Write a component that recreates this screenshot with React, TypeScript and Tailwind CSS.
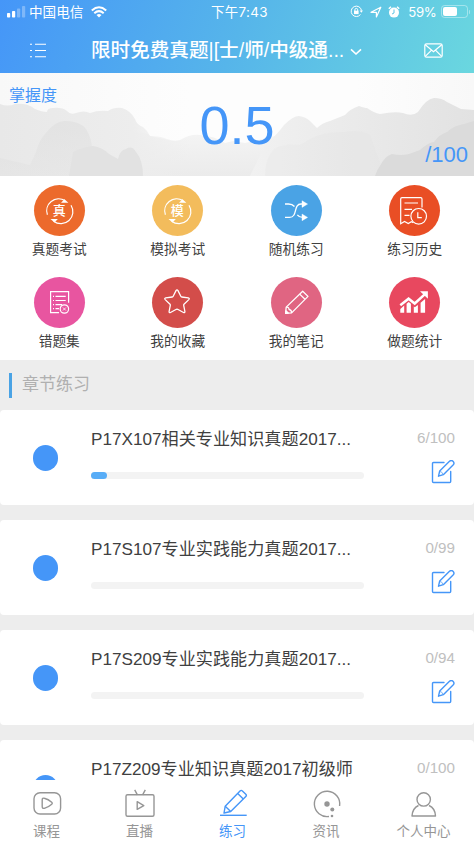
import React from 'react';

interface Feature {
  label: string;
  bg: string;
  icon: React.ReactNode;
}

interface Chapter {
  title: string;
  done: number;
  total: number;
}

const LoopIcon = ({ char }: { char: string }) => (
  <svg viewBox="0 0 51 51" className="h-full w-full" fill="none" stroke="white" strokeWidth="1.2">
    <path d="M13.4 29.8A12 12 0 0 1 31 15.6" />
    <path d="M37 20.2A12 12 0 0 1 19.6 36.2" />
    <path d="M27 17.7l3.4-3.5 4 3.5z M23.900 34.100h-7.400l4 3.500z" fill="white" stroke="none" />
    <text x="25.2" y="30.3" fontSize="13" fontWeight="500" textAnchor="middle" fill="white" stroke="none">{char}</text>
  </svg>
);

const ShuffleIcon = () => (
  <svg viewBox="0 0 51 51" className="h-full w-full" fill="none" stroke="white" strokeWidth="1.3">
    <path d="M14 19h3.500c2.500 0 4.500.8 6 2.500" />
    <path d="M14 32.400h4.500c8.500 0 3.500-13.400 11.500-13.400h2" />
    <path d="M26.300 29.800c1.300 1.700 3 2.500 5.500 2.600" />
    <path d="M31 15.700l5.600 3.400-5.600 3.300z M31 29l5.600 3.400-5.600 3.300z" fill="white" strokeWidth=".4" />
  </svg>
);

const HistoryIcon = () => (
  <svg viewBox="0 0 51 51" className="h-full w-full" fill="none" stroke="white" strokeWidth="1.2">
    <path d="M33 22.500V14q0-1.300-1.300-1.300H13q-1.300 0-1.300 1.300V38.700l3.800-2.200 3.800 2 3-1.700 2 1" />
    <path d="M15.500 18H29M15.500 24.300H23M15.500 30.400H20.500" />
    <circle cx="29.700" cy="31.300" r="7.800" />
    <path d="M28.800 27.300v5.400h4" />
  </svg>
);

const MistakeIcon = () => (
  <svg viewBox="0 0 51 51" className="h-full w-full" fill="none" stroke="white" strokeWidth="1.2">
    <path d="M34.600 25.800V14.600H16.600V35.700H25" />
    <path d="M19 19.400h1M21.500 19.400H31.700M19 23.500h1M21.500 23.500H31.700M19 27.600h1M21.500 27.600H28M19 31.700h1M21.500 31.700H25" />
    <circle cx="30.400" cy="32" r="4.200" />
    <path d="M28.900 30.500l3 3M31.900 30.500l-3 3" strokeWidth=".8" />
  </svg>
);

const StarIcon = () => (
  <svg viewBox="0 0 51 51" className="h-full w-full" fill="none" stroke="white" strokeWidth="1.300" strokeLinejoin="round">
    <path d="M24 13.600q1-1.600 2 0l2.800 5.700q.3.6 1 .7l6.500.9q1.600.4.500 1.700l-4.800 4.600q-.4.500-.3 1.100l1.200 6.200q.1 1.600-1.400 1l-5.900-3.200q-.6-.3-1.200 0l-5.900 3.200q-1.500.6-1.400-1l1.200-6.200q.1-.6-.3-1.100l-4.800-4.600q-1.100-1.300.500-1.700l6.500-.9q.7-.1 1-.7z" />
  </svg>
);

const NoteIcon = () => (
  <svg viewBox="0 0 51 51" className="h-full w-full" fill="none" stroke="white" strokeWidth="1.300" strokeLinejoin="round">
    <path d="M14.600 36.300l.6-6.200L31.700 14.200l5.300 5.200L20.600 35.900z" />
    <path d="M15.200 30.100q2.500-.4 2.900 2.400 2.600.4 2.500 3.400M28.700 17.100l5.300 5.200" />
    <path d="M14.700 36.300l.2-2.500 2.300 2.200z" fill="white" />
  </svg>
);

const StatsIcon = () => (
  <svg viewBox="0 0 51 51" className="h-full w-full" fill="white">
    <path d="M11.300 35.800v-3.800l3.900-3.400v7.200zM17.600 35.800v-9l2.100-1.800 2.200 1.800v9zM24.800 35.800v-6.200l1 .6 3.100-2.300v7.900zM31.600 35.800v-10l4.500-3.900v13.900z" />
    <path d="M11.300 28.300l8.300-6.600 6.100 4.800 10-9.200" fill="none" stroke="white" strokeWidth="2.500" />
    <path d="M31 14.300h7.900v7.500z" />
  </svg>
);

const EditIcon = () => (
  <svg viewBox="0 0 24 24" className="h-6 w-6" fill="none" stroke="#4596f8" strokeWidth="1.400" strokeLinejoin="round" strokeLinecap="round">
    <path d="M13 2.500H2.500q-1 0-1 1v18q0 1 1 1H18.700q1 0 1-1V11.500" />
    <path d="M7.500 16.200l1.200-5.200 9.800-9.700q1.700-1.500 3.500-.1 1.800 1.800.3 3.600l-10 9.900z" />
    <path d="M8.700 11.300q2.700.2 3.300 3" strokeWidth=".7" />
  </svg>
);

const features: Feature[] = [
  { label: '真题考试', bg: 'bg-[#ec6a2c]', icon: <LoopIcon char="真" /> },
  { label: '模拟考试', bg: 'bg-[#f3bc5c]', icon: <LoopIcon char="模" /> },
  { label: '随机练习', bg: 'bg-[#4aa3e5]', icon: <ShuffleIcon /> },
  { label: '练习历史', bg: 'bg-[#e94e25]', icon: <HistoryIcon /> },
  { label: '错题集', bg: 'bg-[#e855a0]', icon: <MistakeIcon /> },
  { label: '我的收藏', bg: 'bg-[#d34d4a]', icon: <StarIcon /> },
  { label: '我的笔记', bg: 'bg-[#e06582]', icon: <NoteIcon /> },
  { label: '做题统计', bg: 'bg-[#e8485f]', icon: <StatsIcon /> },
];

const chapters: Chapter[] = [
  { title: 'P17X107相关专业知识真题2017...', done: 6, total: 100 },
  { title: 'P17S107专业实践能力真题2017...', done: 0, total: 99 },
  { title: 'P17S209专业实践能力真题2017...', done: 0, total: 94 },
  { title: 'P17Z209专业知识真题2017初级师', done: 0, total: 100 },
];

const tabs = [
  {
    label: '课程',
    icon: (
      <>
        <rect x="3" y="5.700" width="26.600" height="21.300" rx="6" />
        <path d="M11.200 13q0-2.400 2.200-1.700 4 1 7.300 4 1.100 1 0 1.900-3.300 3-7.300 4.100-2.200.5-2.200-1.700z" />
      </>
    ),
  },
  {
    label: '直播',
    icon: (
      <>
        <rect x="2" y="7.800" width="28" height="21.400" rx="1.500" />
        <path d="M10.700 2.800l2.700 5M21.300 2.800l-2.700 5M13.200 14.700v7.700l6.600-3.800z" />
      </>
    ),
  },
  {
    label: '练习',
    icon: (
      <>
        <path d="M3 28.300H29.700" />
        <path d="M7 26l1.200-6.700L23 4q1.200-1.200 2.400-.1l3.400 3.300q1.200 1.200 0 2.400L13.700 24.500z" />
        <path d="M8.200 19.300l5.500 5.200M20.700 6.500l5.600 5.500" />
      </>
    ),
  },
  {
    label: '资讯',
    icon: (
      <>
        <path d="M29.600 19A12.700 12.700 0 1 0 19 29.500" />
        <g fill="#969696" stroke="none">
          <circle cx="17" cy="17" r="2.700" />
          <circle cx="22.300" cy="22.600" r="2" />
          <circle cx="22" cy="29" r="1.300" />
        </g>
      </>
    ),
  },
  {
    label: '个人中心',
    icon: (
      <>
        <circle cx="15.700" cy="12.400" r="6.700" />
        <path d="M10.500 18.500C6 20.500 4.300 24.500 4 29H27.500C27.300 24.500 25.500 20.500 21 18.500" />
      </>
    ),
  },
];

const StatusBar = () => (
  <div className="grid h-6 grid-cols-[1fr_auto_1fr] items-center pl-[7px] pr-1 text-[13.600px] leading-none">
    <div className="flex items-center">
      <svg viewBox="0 0 19 12" className="mr-[3px] h-3 w-[19px]" fill="white">
        <rect x="0" y="7" width="3.200" height="4.500" rx=".8" />
        <rect x="5" y="5" width="3.200" height="6.500" rx=".8" />
        <rect x="10" y="2.500" width="3.200" height="9" rx=".8" opacity=".3" />
        <rect x="15" y="0" width="3.200" height="11.500" rx=".8" opacity=".3" />
      </svg>
      <span className="translate-y-px">中国电信</span>
      <svg viewBox="0 0 16 12" className="ml-2 h-3 w-4" fill="none" stroke="white" strokeWidth="2">
        <path d="M.8 4.400Q8-2 15.200 4.400M3.300 7.200Q8 3 12.700 7.200" />
        <path d="M5.500 9Q8 7 10.500 9L8 11.500z" fill="white" stroke="none" />
      </svg>
    </div>
    <div className="translate-x-px translate-y-px font-['Inter','Noto_Sans_CJK_SC',sans-serif] text-[13.400px] tracking-[0.4px]">下午7:43</div>
    <div className="flex items-center justify-end">
      <svg viewBox="0 0 13 13" className="h-[13px] w-[13px]" fill="none" stroke="white" strokeWidth="1">
        <path d="M10.500 9.500A5.200 5.200 0 1 1 11.500 5.500" />
        <path d="M9.600 5.500h3.400l-1.700 2.200z" fill="white" stroke="none" />
        <rect x="4" y="5.700" width="4.600" height="3.400" fill="white" stroke="none" />
        <path d="M4.900 6V4.800a1.400 1.400 0 0 1 2.800 0V6" />
      </svg>
      <svg viewBox="0 0 12 12" className="ml-[7px] h-3 w-3" fill="none" stroke="white" strokeWidth="1.200" strokeLinejoin="round">
        <path d="M1 6.300L10.800 1.200 6.400 11V6.300z" />
      </svg>
      <svg viewBox="0 0 12 12" className="ml-[6px] h-3 w-3">
        <circle cx="6" cy="6.600" r="5" fill="white" />
        <path d="M.8 2.800L3 .8M11.200 2.800L9 .8" stroke="white" strokeWidth="1.500" />
        <path d="M6 3.500V7L4 8" fill="none" stroke="#5fc3e3" strokeWidth="1" />
      </svg>
      <span className="ml-2 translate-y-px font-['Inter',sans-serif] text-[13.200px] tracking-[-0.3px]">59%</span>
      <div className="ml-1 flex h-[13px] w-[27px] rounded-[3.500px] border border-white/40 p-px">
        <div className="w-[14px] rounded-[2px] bg-white" />
      </div>
      <div className="ml-px h-1 w-[1.500px] rounded-r-full bg-white/40" />
    </div>
  </div>
);

const Mountains = () => (
  <svg viewBox="0 0 474 103" preserveAspectRatio="none" className="absolute inset-0 h-full w-full">
    <defs>
      <linearGradient id="sky" x1="0" y1="0" x2="1" y2="0">
        <stop offset="0" stopColor="#f8f8f8" />
        <stop offset=".4" stopColor="#fdfdfd" />
        <stop offset=".75" stopColor="#fdfdfd" />
        <stop offset="1" stopColor="#f8f8f8" />
      </linearGradient>
      <linearGradient id="haze" x1="0" y1="0" x2="0" y2="1">
        <stop offset="0" stopColor="#f4f4f4" />
        <stop offset="1" stopColor="#ebebeb" />
      </linearGradient>
      <linearGradient id="left" gradientUnits="userSpaceOnUse" x1="0" y1="0" x2="190" y2="0">
        <stop offset="0" stopColor="#e8e8e8" />
        <stop offset=".7" stopColor="#ededed" />
        <stop offset="1" stopColor="#ededed" stopOpacity="0" />
      </linearGradient>
      <linearGradient id="right" gradientUnits="userSpaceOnUse" x1="250" y1="0" x2="474" y2="0">
        <stop offset="0" stopColor="#f1f1f1" />
        <stop offset="1" stopColor="#e2e2e2" />
      </linearGradient>
      <linearGradient id="fade" x1="0" y1="0" x2="0" y2="1">
        <stop offset="0" stopColor="#dddddd" stopOpacity=".55" />
        <stop offset="1" stopColor="#dddddd" stopOpacity=".25" />
      </linearGradient>
    </defs>
    <rect width="474" height="103" fill="url(#sky)" />
    <path
      fill="url(#haze)"
      d="M130 103V60Q147 58 150 63Q160 63 167 66Q175 69 180 67Q190 61 200 62Q215 63 225 70L233 68L245 70L275 63V103z"
    />
    <path
      fill="url(#left)"
      d="M0 31Q8 34 15 31Q28 30 35 36Q42 39 47 39Q47 35 53 35Q62 34 67 38Q70 42 76 40Q84 37 90 40Q98 37 108 38Q114 34 122 35Q131 38 135 46Q137 52 143 54Q148 58 150 63Q160 65 167 67Q176 70 190 64V103H0z"
    />
    <path
      fill="url(#right)"
      d="M250 103L265 72Q276 63 284 52Q293 43 299 43Q306 44 310 48L317 55Q322 50 330 48L345 42Q350 36 359 33Q365 35 367 35Q374 40 380 41Q395 38 403 40Q412 44 418 39Q426 26 434 25Q442 25 447 29Q455 33 461 36L474 37V103z"
    />
    <path fill="#dddddd" opacity=".18" d="M265 103Q265 85 274 76Q285 70 300 72L310 66Q325 58 345 59Q360 56 370 62L380 90L385 103z" />
    <path fill="url(#fade)" d="M0 85L30 92L36 79Q39 67 46 60Q55 48 65 48Q80 48 86 56Q92 66 92 76L98 103H0z" />
    <path fill="#e2e2e2" d="M69 103L73 79Q83 74 93 73Q102 74 109 81L118 86Q120 77 126 76Q132 72 136 79Q143 87 143 103z" />
    <path
      fill="#dbdbdb"
      d="M375 103Q378 95 380 93Q385 83 392 81Q401 83 409 81L420 77Q429 69 434 69Q440 61 447 59Q455 52 464 51L474 48V103z"
    />
  </svg>
);

const App: React.FC = () => {
  return (
    <div className="flex h-[843px] w-full flex-col overflow-hidden bg-[#ededed] font-['Liberation_Sans','Noto_Sans_CJK_SC',sans-serif] text-[#404040]">
      {/* ヘッダー */}
      <header className="h-[73px] shrink-0 bg-[linear-gradient(110deg,#4596f8_0%,#56b5ea_50%,#6ad7df_100%)] text-white">
        <StatusBar />
        <div className="flex h-[49px] items-center pl-[30px] pr-[31px] pt-[3px]">
          <svg viewBox="0 0 16 15" className="h-[15px] w-4" stroke="white" strokeWidth="1.100">
            <path d="M0 1.200h2M5 1.200h11M0 7.500h2M5 7.500h11M0 13.800h2M5 13.800h11" />
          </svg>
          <h1 className="ml-[45px] whitespace-nowrap text-[19.600px] font-medium leading-7">限时免费真题|[士/师/中级通...</h1>
          <svg viewBox="0 0 12 8" className="ml-[6px] mt-1 h-2 w-3" fill="none" stroke="white" strokeWidth="1.600">
            <path d="M1 1.300l5 4.700 5-4.700" />
          </svg>
          <svg viewBox="0 0 19 15" className="ml-auto h-[15px] w-[19px]" fill="none" stroke="white" strokeWidth="1.200">
            <rect x=".8" y=".8" width="17.400" height="13.400" rx="1.800" />
            <path d="M1.300 1.700l8.200 7 8.200-7M1.300 13.400l6-6M17.700 13.400l-6-6" />
          </svg>
        </div>
      </header>

      {/* 掌握度 */}
      <section className="relative h-[103px] shrink-0 text-[#4596f8]">
        <Mountains />
        <div className="relative flex h-full items-center justify-center">
          <span className="text-[54px] leading-none">0.5</span>
        </div>
        <span className="absolute left-[9px] top-[11px] text-[16px] leading-6">掌握度</span>
        <span className="absolute bottom-[7px] right-[6px] text-[22px] leading-7">/100</span>
      </section>

      {/* 機能メニュー */}
      <section className="grid h-[184px] shrink-0 grid-cols-4 content-start gap-y-[17px] bg-white pt-[9px]">
        {features.map(item => (
          <div key={item.label} className="flex h-[75px] flex-col items-center">
            <div className={`h-[51px] w-[51px] shrink-0 rounded-full ${item.bg}`}>{item.icon}</div>
            <span className="mt-1 text-[13.700px] leading-5">{item.label}</span>
          </div>
        ))}
      </section>

      <div className="flex h-[50px] shrink-0 items-center pl-[9px]">
        <div className="h-[25px] w-[3px] bg-[#4aa3e5]" />
        <h2 className="ml-[10px] text-[17px] leading-6 text-[#b0b0b0]">章节练习</h2>
      </div>

      {/* 章リスト */}
      <main className="flex min-h-0 flex-1 flex-col gap-[15px] overflow-hidden">
        {chapters.map(chapter => (
          <article key={chapter.title} className="flex h-[95px] shrink-0 rounded bg-white">
            <div className="flex w-[91px] items-center pl-[32.500px] pt-px">
              <div className="h-[25.500px] w-[25.500px] rounded-full bg-[#4596f8]" />
            </div>
            <div className="w-[273px] pt-[17px]">
              <h3 className="whitespace-nowrap text-[17.150px] leading-6">{chapter.title}</h3>
              <div className="mt-[21px] h-[6.500px] rounded-full bg-[#f3f3f3]">
                {chapter.done > 0 && (
                  <div className="h-full rounded-full bg-[#58adf7]" style={{ width: `${chapter.done}%` }} />
                )}
              </div>
            </div>
            <div className="flex flex-1 flex-col items-end pr-[19px] pt-[17px]">
              <span className="text-[15.200px] leading-[22px] text-[#c0c0c0]">{chapter.done}/{chapter.total}</span>
              <div className="mt-[11px]">
                <EditIcon />
              </div>
            </div>
          </article>
        ))}
      </main>

      {/* タブバー */}
      <nav className="grid h-[63px] shrink-0 grid-cols-[93px_93px_93px_94px_101px] bg-white pt-[7px]">
        {tabs.map(tab => (
          <div
            key={tab.label}
            className={`flex flex-col items-center ${tab.label === '练习' ? 'text-[#4596f8]' : 'text-[#969696]'}`}
          >
            <svg viewBox="0 0 32 32" className="h-8 w-8 shrink-0" fill="none" stroke="currentColor" strokeWidth="1.400" strokeLinejoin="round">
              {tab.icon}
            </svg>
            <span className="mt-[3px] text-[13.500px] leading-5">{tab.label}</span>
          </div>
        ))}
      </nav>
    </div>
  );
};

export default App;
